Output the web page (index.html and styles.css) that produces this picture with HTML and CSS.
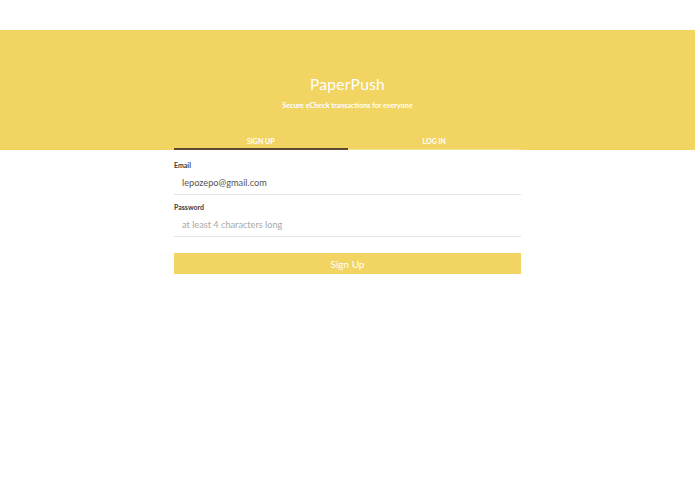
FILE: index.html
```html
<!DOCTYPE html>
<html>
<head>
<meta charset="utf-8">
<link rel="stylesheet" href="styles.css">
</head>
<body>
<div class="top-gap"></div>
<header class="hero">
  <h1 class="title">PaperPush</h1>
  <p class="subtitle">Secure eCheck transactions for everyone</p>
  <nav class="tabs">
    <div class="tab active">SIGN UP</div>
    <div class="tab">LOG IN</div>
  </nav>
</header>
<main class="form">
  <label class="label">Email</label>
  <div class="input">lepozepo@gmail.com</div>
  <label class="label">Password</label>
  <div class="input placeholder">at least 4 characters long</div>
  <button class="btn">Sign Up</button>
</main>
</body>
</html>
```
FILE: styles.css
```css
html, body {
  margin: 0;
  padding: 0;
  background: #ffffff;
  font-family: Lato, "Open Sans", sans-serif;
}
.top-gap {
  height: 30px;
}
.hero {
  background: #f1d462;
  height: 120px;
  display: flex;
  flex-direction: column;
  align-items: center;
  box-sizing: border-box;
  padding-top: 44px;
}
.title {
  margin: 0;
  color: #ffffff;
  font-size: 15.5px;
  font-weight: 400;
  line-height: 20px;
  letter-spacing: 0.3px;
}
.subtitle {
  margin: 7px 0 0;
  color: #ffffff;
  font-size: 7.2px;
  font-weight: 700;
  line-height: 9px;
}
.tabs {
  margin-top: auto;
  width: 347px;
  display: flex;
  border-bottom: 1px solid #f7e38f;
}
.tab {
  flex: 1;
  text-align: center;
  color: #ffffff;
  font-size: 7px;
  font-weight: 700;
  line-height: 9px;
  padding-bottom: 2px;
  border-bottom: 2px solid transparent;
  margin-bottom: -1px;
}
.tab.active {
  border-bottom-color: #5c4a33;
}
.form {
  width: 347px;
  margin: 0 auto;
  display: flex;
  flex-direction: column;
  padding-top: 11px;
}
.label {
  color: #3c3c3c;
  font-size: 7px;
  font-weight: 700;
  line-height: 9px;
}
.input {
  color: #555555;
  font-size: 9.2px;
  line-height: 13px;
  padding: 6px 8px 5px;
  border-bottom: 1px solid #e4e4e4;
  margin-bottom: 8px;
}
.input.placeholder {
  color: #a8a8a8;
}
.btn {
  margin-top: 8px;
  height: 21px;
  border: 0;
  background: #f1d462;
  color: #ffffff;
  font-family: inherit;
  font-size: 10px;
  padding: 0;
}
```
